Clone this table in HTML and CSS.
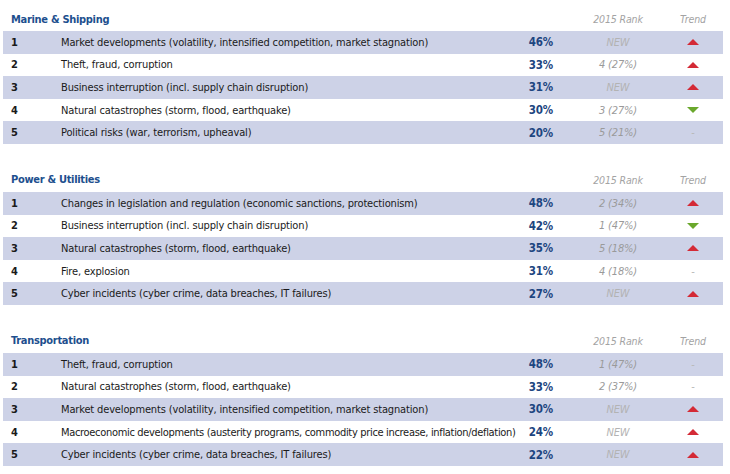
FILE: index.html
```html
<!DOCTYPE html>
<html>
<head>
<meta charset="utf-8">
<link rel="stylesheet" href="styles.css">
</head>
<body>
<div class="page">
  <section class="block">
    <div class="head"><span class="title">Marine &amp; Shipping</span><span class="h-rank">2015 Rank</span><span class="h-trend">Trend</span></div>
    <div class="row shade"><span class="num">1</span><span class="desc">Market developments (volatility, intensified competition, market stagnation)</span><span class="pct">46%</span><span class="rank new">NEW</span><span class="trend"><i class="up"></i></span></div>
    <div class="row"><span class="num">2</span><span class="desc">Theft, fraud, corruption</span><span class="pct">33%</span><span class="rank">4 (27%)</span><span class="trend"><i class="up"></i></span></div>
    <div class="row shade"><span class="num">3</span><span class="desc">Business interruption (incl. supply chain disruption)</span><span class="pct">31%</span><span class="rank new">NEW</span><span class="trend"><i class="up"></i></span></div>
    <div class="row"><span class="num">4</span><span class="desc">Natural catastrophes (storm, flood, earthquake)</span><span class="pct">30%</span><span class="rank">3 (27%)</span><span class="trend"><i class="down"></i></span></div>
    <div class="row shade"><span class="num">5</span><span class="desc">Political risks (war, terrorism, upheaval)</span><span class="pct">20%</span><span class="rank">5 (21%)</span><span class="trend"><span class="dash">-</span></span></div>
  </section>
  <section class="block">
    <div class="head"><span class="title">Power &amp; Utilities</span><span class="h-rank">2015 Rank</span><span class="h-trend">Trend</span></div>
    <div class="row shade"><span class="num">1</span><span class="desc">Changes in legislation and regulation (economic sanctions, protectionism)</span><span class="pct">48%</span><span class="rank">2 (34%)</span><span class="trend"><i class="up"></i></span></div>
    <div class="row"><span class="num">2</span><span class="desc">Business interruption (incl. supply chain disruption)</span><span class="pct">42%</span><span class="rank">1 (47%)</span><span class="trend"><i class="down"></i></span></div>
    <div class="row shade"><span class="num">3</span><span class="desc">Natural catastrophes (storm, flood, earthquake)</span><span class="pct">35%</span><span class="rank">5 (18%)</span><span class="trend"><i class="up"></i></span></div>
    <div class="row"><span class="num">4</span><span class="desc">Fire, explosion</span><span class="pct">31%</span><span class="rank">4 (18%)</span><span class="trend"><span class="dash">-</span></span></div>
    <div class="row shade"><span class="num">5</span><span class="desc">Cyber incidents (cyber crime, data breaches, IT failures)</span><span class="pct">27%</span><span class="rank new">NEW</span><span class="trend"><i class="up"></i></span></div>
  </section>
  <section class="block">
    <div class="head"><span class="title">Transportation</span><span class="h-rank">2015 Rank</span><span class="h-trend">Trend</span></div>
    <div class="row shade"><span class="num">1</span><span class="desc">Theft, fraud, corruption</span><span class="pct">48%</span><span class="rank">1 (47%)</span><span class="trend"><span class="dash">-</span></span></div>
    <div class="row"><span class="num">2</span><span class="desc">Natural catastrophes (storm, flood, earthquake)</span><span class="pct">33%</span><span class="rank">2 (37%)</span><span class="trend"><span class="dash">-</span></span></div>
    <div class="row shade"><span class="num">3</span><span class="desc">Market developments (volatility, intensified competition, market stagnation)</span><span class="pct">30%</span><span class="rank new">NEW</span><span class="trend"><i class="up"></i></span></div>
    <div class="row"><span class="num">4</span><span class="desc tight">Macroeconomic developments (austerity programs, commodity price increase, inflation/deflation)</span><span class="pct">24%</span><span class="rank new">NEW</span><span class="trend"><i class="up"></i></span></div>
    <div class="row shade"><span class="num">5</span><span class="desc">Cyber incidents (cyber crime, data breaches, IT failures)</span><span class="pct">22%</span><span class="rank new">NEW</span><span class="trend"><i class="up"></i></span></div>
  </section>
</div>
</body>
</html>
```

FILE: styles.css
```css
html, body {
  margin: 0;
  padding: 0;
  background: #ffffff;
}
body {
  font-family: "DejaVu Sans Condensed", "Liberation Sans", sans-serif;
  font-size: 11px;
  letter-spacing: -0.15px;
  color: #1a1a1a;
}
.page {
  width: 720px;
  padding: 7px 0 0 3px;
  display: flex;
  flex-direction: column;
  gap: 24px;
}
.block {
  display: flex;
  flex-direction: column;
}
.head, .row {
  display: grid;
  grid-template-columns: 50px minmax(0, 1fr) 40px 100px 70px;
  align-items: center;
  padding-left: 8px;
}
.head {
  height: 24px;
}
.row {
  height: 22.6px;
}
.shade {
  background: #cdd2e7;
}
.title {
  grid-column: 1 / 4;
  font-weight: bold;
  color: #1d4f8e;
  font-size: 11px;
  letter-spacing: -0.3px;
}
.h-rank, .rank {
  text-align: center;
  margin-left: 30px;
  font-style: italic;
}
.h-rank, .h-trend {
  color: #a3a3a3;
  font-style: italic;
  font-size: 10.5px;
}
.h-trend, .trend {
  text-align: center;
  padding-left: 10px;
  display: flex;
  justify-content: center;
  align-items: center;
}
.num {
  font-weight: bold;
}
.desc {
  white-space: nowrap;
}
.desc.tight {
  letter-spacing: -0.32px;
}
.pct {
  text-align: right;
  font-weight: bold;
  color: #1d4580;
  font-size: 11.5px;
}
.rank {
  color: #9a9a9a;
}
.rank.new {
  color: #b3b3b3;
}
.up {
  display: block;
  width: 0;
  height: 0;
  border-left: 6.5px solid transparent;
  border-right: 6.5px solid transparent;
  border-bottom: 6px solid #d42a36;
}
.down {
  display: block;
  width: 0;
  height: 0;
  border-left: 6.5px solid transparent;
  border-right: 6.5px solid transparent;
  border-top: 6px solid #6aa82c;
}
.dash {
  color: #b8b8b8;
  font-size: 11px;
}
```
